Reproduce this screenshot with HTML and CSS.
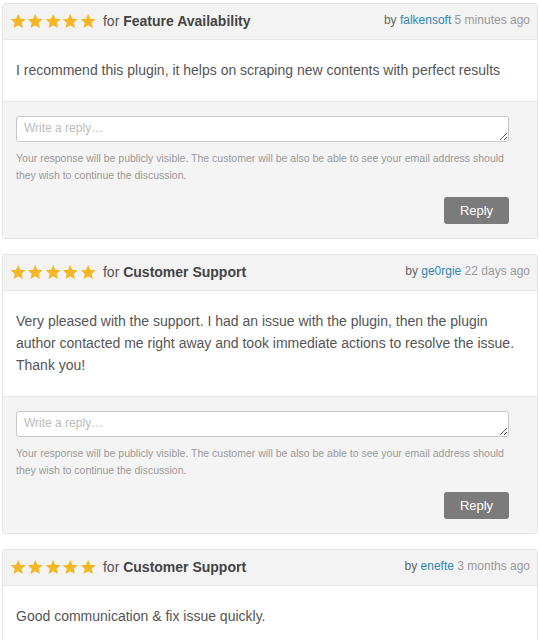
FILE: index.html
```html
<!DOCTYPE html>
<html>
<head>
<meta charset="utf-8">
<link rel="stylesheet" href="styles.css">
</head>
<body>
<svg width="0" height="0" class="defs">
  <defs>
    <symbol id="star" viewBox="0 0 24 24">
      <path d="M12 1.3l3.15 7.2 7.85.7-5.9 5.2 1.75 7.7L12 18.1l-6.85 4 1.75-7.7-5.9-5.2 7.85-.7z"/>
    </symbol>
  </defs>
</svg>
<div class="list">
  <div class="card">
    <div class="head">
      <div class="left">
        <span class="stars"><svg><use href="#star"/></svg><svg><use href="#star"/></svg><svg><use href="#star"/></svg><svg><use href="#star"/></svg><svg><use href="#star"/></svg></span>
        <span class="for">for <b>Feature Availability</b></span>
      </div>
      <div class="meta">by <a href="#">falkensoft</a> <span class="ago">5 minutes ago</span></div>
    </div>
    <div class="body">I recommend this plugin, it helps on scraping new contents with perfect results</div>
    <div class="reply">
      <textarea placeholder="Write a reply…"></textarea>
      <p class="note">Your response will be publicly visible. The customer will be also be able to see your email address should they wish to continue the discussion.</p>
      <div class="actions"><button>Reply</button></div>
    </div>
  </div>
  <div class="card">
    <div class="head">
      <div class="left">
        <span class="stars"><svg><use href="#star"/></svg><svg><use href="#star"/></svg><svg><use href="#star"/></svg><svg><use href="#star"/></svg><svg><use href="#star"/></svg></span>
        <span class="for">for <b>Customer Support</b></span>
      </div>
      <div class="meta">by <a href="#">ge0rgie</a> <span class="ago">22 days ago</span></div>
    </div>
    <div class="body">Very pleased with the support. I had an issue with the plugin, then the plugin author contacted me right away and took immediate actions to resolve the issue. Thank you!</div>
    <div class="reply">
      <textarea placeholder="Write a reply…"></textarea>
      <p class="note">Your response will be publicly visible. The customer will be also be able to see your email address should they wish to continue the discussion.</p>
      <div class="actions"><button>Reply</button></div>
    </div>
  </div>
  <div class="card">
    <div class="head">
      <div class="left">
        <span class="stars"><svg><use href="#star"/></svg><svg><use href="#star"/></svg><svg><use href="#star"/></svg><svg><use href="#star"/></svg><svg><use href="#star"/></svg></span>
        <span class="for">for <b>Customer Support</b></span>
      </div>
      <div class="meta">by <a href="#">enefte</a> <span class="ago">3 months ago</span></div>
    </div>
    <div class="body">Good communication &amp; fix issue quickly.</div>
  </div>
</div>
</body>
</html>
```

FILE: styles.css
```css
html, body {
  margin: 0;
  padding: 0;
  background: #fff;
}
body {
  font-family: Arial, "Liberation Sans", sans-serif;
  color: #555;
  overflow: hidden;
}
.defs {
  position: absolute;
  width: 0;
  height: 0;
}
.list {
  padding: 3px 2px 0 2px;
  display: flex;
  flex-direction: column;
  gap: 15px;
}
.card {
  border: 1px solid #e4e4e4;
  border-radius: 3px;
  background: #fff;
  overflow: hidden;
}
.head {
  height: 35px;
  background: #f3f3f3;
  border-bottom: 1px solid #e8e8e8;
  display: flex;
  align-items: center;
  justify-content: space-between;
  padding: 0 7px 0 7px;
}
.left {
  display: flex;
  align-items: center;
}
.stars {
  display: flex;
  gap: 1px;
  margin-right: 7px;
}
.stars svg {
  width: 16.4px;
  height: 16.4px;
  fill: #f4b623;
}
.for {
  font-size: 14px;
  color: #555;
}
.for b {
  color: #444;
}
.meta {
  font-size: 12px;
  color: #666;
  margin-top: -4px;
}
.meta a {
  color: #2f87b3;
  text-decoration: none;
}
.ago {
  color: #999;
}
.body {
  padding: 19px 16px 20px 13px;
  font-size: 14px;
  line-height: 22px;
  color: #555;
  border-bottom: 1px solid #eaeaea;
}
.reply {
  background: #f4f4f4;
  padding: 14px 28px 14px 13px;
}
textarea {
  display: block;
  box-sizing: border-box;
  width: 100%;
  height: 26px;
  border: 1px solid #c8c8c8;
  border-radius: 3px;
  padding: 4px 7px;
  font-family: Arial, "Liberation Sans", sans-serif;
  font-size: 12px;
  color: #555;
  background: #fff;
  resize: vertical;
}
textarea::placeholder {
  color: #bbb;
}
.note {
  margin: 8px 0 0 0;
  font-size: 10.5px;
  line-height: 17px;
  color: #999;
}
.actions {
  display: flex;
  justify-content: flex-end;
  margin-top: 13px;
}
button {
  width: 65px;
  height: 27px;
  border: none;
  border-radius: 3px;
  background: #7b7b7b;
  color: #fff;
  font-family: Arial, "Liberation Sans", sans-serif;
  font-size: 13px;
  padding: 0;
}
```
